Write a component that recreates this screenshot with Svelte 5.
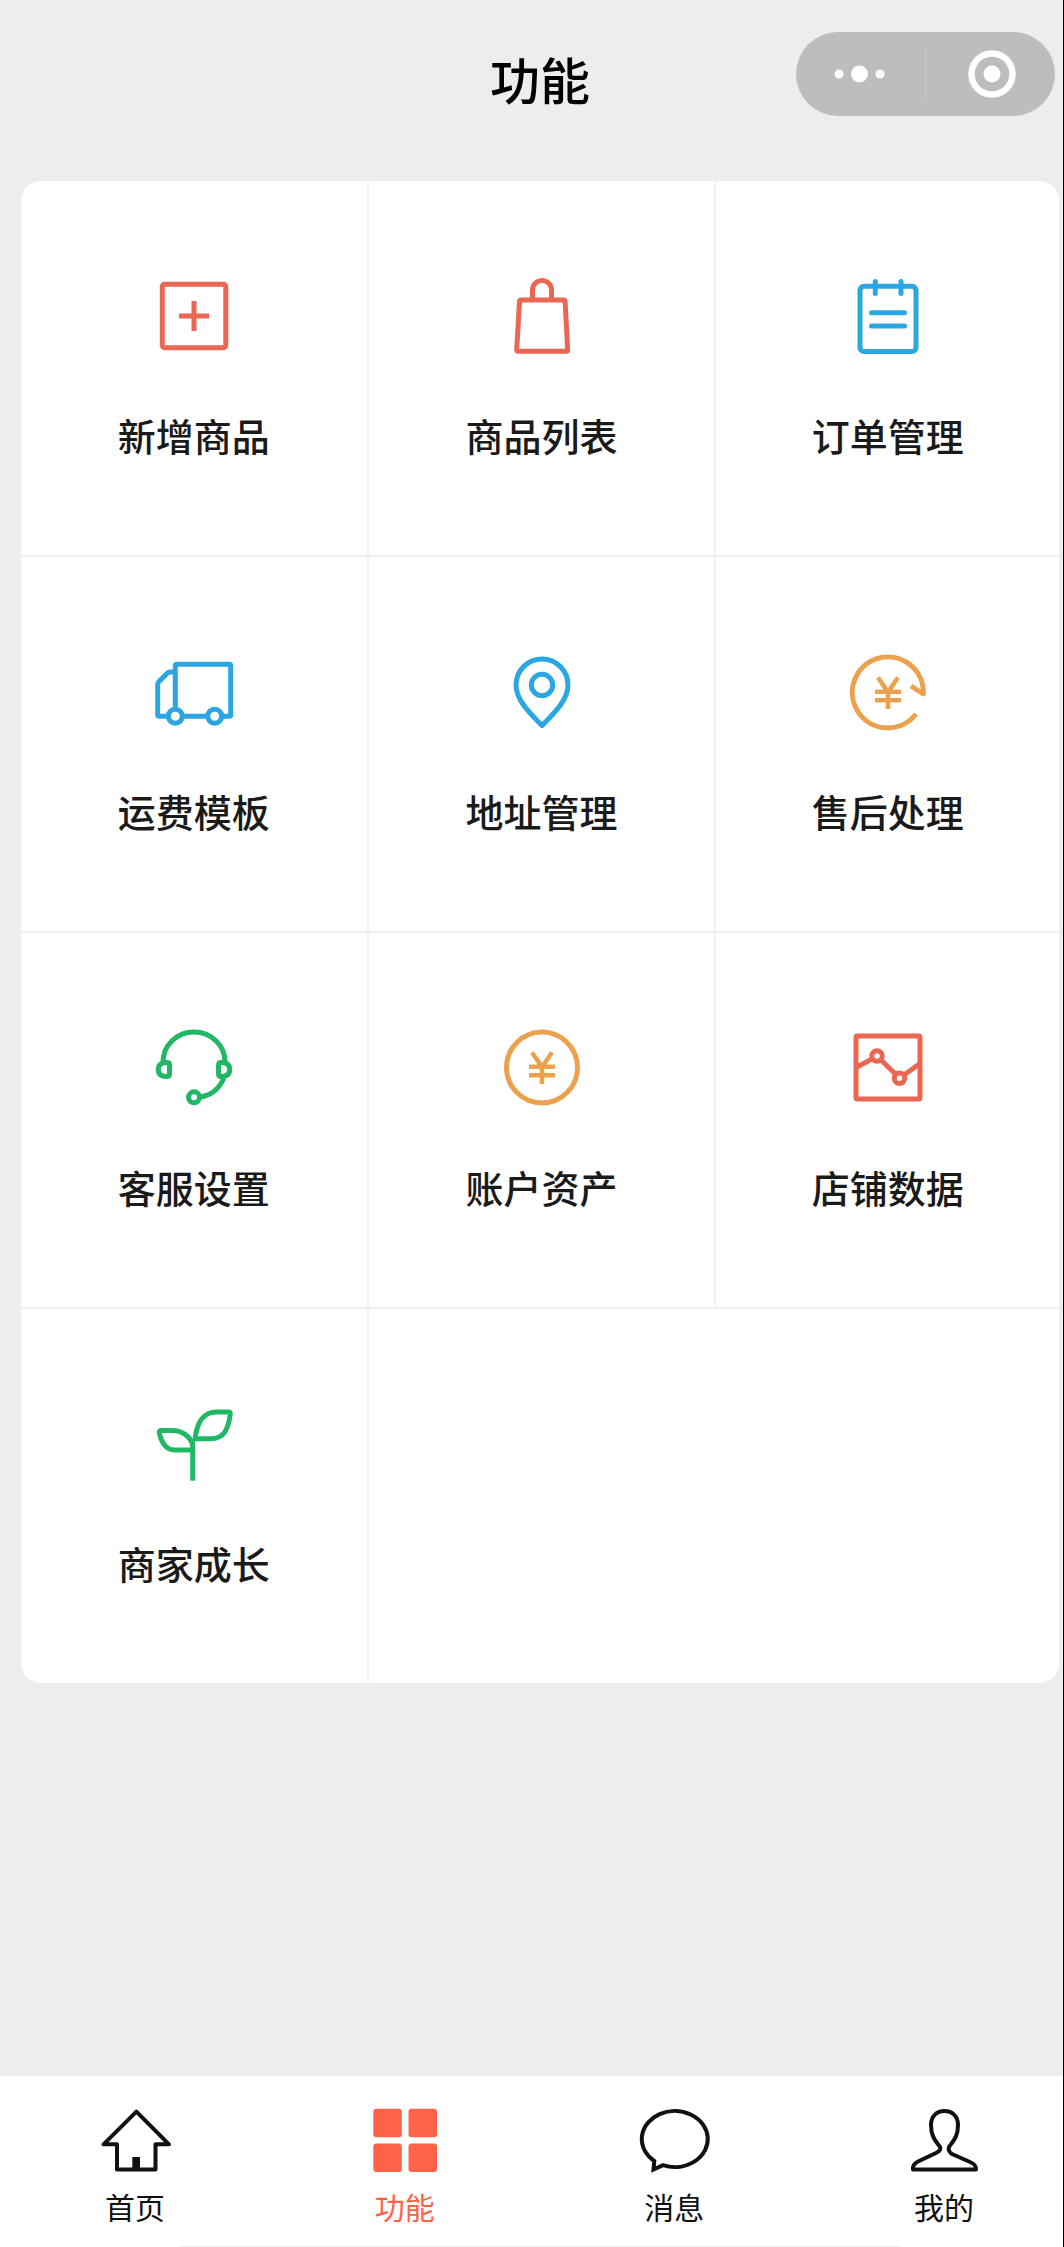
<script lang="ts">
  type Icon = 'add' | 'bag' | 'order' | 'truck' | 'pin' | 'refund' | 'service' | 'coin' | 'chart' | 'sprout';

  const features: { label: string; icon: Icon; tone: string }[] = [
    { label: '新增商品', icon: 'add', tone: 'red' },
    { label: '商品列表', icon: 'bag', tone: 'red' },
    { label: '订单管理', icon: 'order', tone: 'blue' },
    { label: '运费模板', icon: 'truck', tone: 'blue' },
    { label: '地址管理', icon: 'pin', tone: 'blue' },
    { label: '售后处理', icon: 'refund', tone: 'orange' },
    { label: '客服设置', icon: 'service', tone: 'green' },
    { label: '账户资产', icon: 'coin', tone: 'orange' },
    { label: '店铺数据', icon: 'chart', tone: 'red' },
    { label: '商家成长', icon: 'sprout', tone: 'green' }
  ];

  const tabs = [
    { id: 'home', label: '首页' },
    { id: 'features', label: '功能' },
    { id: 'messages', label: '消息' },
    { id: 'me', label: '我的' }
  ];

  let activeTab = $state('features');
</script>

<div class="page">
  <header class="header">
    <h1>功能</h1>
    <div class="capsule">
      <button type="button" aria-label="更多">
        <svg width="60" height="60" viewBox="0 0 60 60" fill="#fff">
          <circle cx="8" cy="30" r="4.5" />
          <circle cx="28.500" cy="30" r="8.500" />
          <circle cx="49" cy="30" r="4.5" />
        </svg>
      </button>
      <span class="capsule-line"></span>
      <button type="button" aria-label="关闭">
        <svg width="60" height="60" viewBox="0 0 60 60">
          <circle cx="31" cy="30" r="20.5" fill="none" stroke="#fff" stroke-width="6.5" />
          <circle cx="31" cy="30" r="8.5" fill="#fff" />
        </svg>
      </button>
    </div>
  </header>

  <main class="grid">
    {#each features as item}
      <button type="button" class="cell">
        <svg class="icon {item.tone}" viewBox="0 0 80 80" aria-hidden="true">
          {#if item.icon === 'add'}
            <rect x="8.3" y="8.3" width="63.5" height="63.5" rx="2.5" />
            <path d="M25 40h30M40 25v30" />
          {:else if item.icon === 'bag'}
            <path d="M30.5 24V14a9.5 9.5 0 0 1 19 0v10" />
            <path d="M19 24h42.500q1.500 0 1.600 1.500l2.600 48.300q0 1.500-1.500 1.500H16q-1.500 0-1.300-1.500l2.800-48.300q.1-1.500 1.500-1.500z" />
          {:else if item.icon === 'order'}
            <rect x="12" y="10.3" width="56" height="65.2" rx="4" />
            <path stroke-linecap="round" d="M27.3 5.5v12M53 5.5v12M23.5 36.7h33M23.5 50h33" />
          {:else if item.icon === 'truck'}
            <path d="M21.3 57V14q0-1.7 1.7-1.7h52q1.7 0 1.7 1.7v48.500q0 1.800-1.700 1.800h-7M53.5 64.3h-25" />
            <path d="M21.300 20H16q-1.500 0-2.500 1L5 29.500q-1.300 1.300-1.300 3v30q0 1.800 1.800 1.800H14" />
            <circle cx="21.3" cy="64.3" r="7" />
            <circle cx="60.7" cy="64.3" r="7" />
          {:else if item.icon === 'pin'}
            <path d="M40 73.5C30 63 14 49 14 33a26 26 0 0 1 52 0c0 16-16 30-26 40.5z" />
            <circle cx="40" cy="33" r="10.7" />
          {:else if item.icon === 'refund'}
            <path d="M68 62A35.500 35.500 0 1 1 75.300 42L63 34" />
            <path class="yuan" d="M30 25.5L40 40l10-14.500M40 39v18M27 39.7h26M27 48.3h26" />
          {:else if item.icon === 'service'}
            <path d="M9 34a31 30 0 0 1 62 0" />
            <path d="M13 34.500q2.500 0 2.500 2.500v9q0 2.500-2.500 2.500-8.700 0-8.700-7t8.700-7z" />
            <path d="M67 34.500q-2.500 0-2.500 2.500v9q0 2.500 2.500 2.500 8.700 0 8.700-7t-8.700-7z" />
            <path d="M70 50C65 61 58 67.5 46 69" />
            <circle cx="40" cy="69.3" r="5.5" />
          {:else if item.icon === 'coin'}
            <circle cx="40" cy="39.5" r="35.5" />
            <path class="yuan" d="M30 24.500L40 39l10-14.500M40 38v18M27 38.700h26M27 47.300h26" />
          {:else if item.icon === 'chart'}
            <rect x="8" y="8" width="64" height="63" rx="1.5" />
            <path d="M9 39l15-8M33 32l15 14.500M56 47l16-11.500" />
            <circle cx="29" cy="28" r="5.2" />
            <circle cx="51.5" cy="50.3" r="5.2" />
          {:else}
            <path d="M38.7 37v39.700" />
            <path d="M41 34.700C43 18 50 8 62 8h12.500q2 0 1.800 2C74 27 69 34.700 57 34.700z" />
            <path d="M38.7 46H20C12 46 7 38 5.300 28.500q-.3-2 1.700-2h11C28 26.500 36 32 38.700 41" />
          {/if}
        </svg>
        <span>{item.label}</span>
      </button>
    {/each}
  </main>

  <nav class="tabbar">
    {#each tabs as tab}
      <button
        type="button"
        class="tab"
        class:active={tab.id === activeTab}
        onclick={() => (activeTab = tab.id)}
      >
        <svg viewBox="0 0 80 72" aria-hidden="true">
          {#if tab.id === 'home'}
            <path d="M41.4 7.7L8.5 40.3H22v25.200h38.500V40.300H74z" />
            <path class="solid" d="M37.3 53H45v13h-7.700z" />
          {:else if tab.id === 'features'}
            <g class="solid">
              <rect x="8.3" y="4.7" width="28.5" height="28.5" rx="3" />
              <rect x="43.5" y="4.7" width="28.5" height="28.5" rx="3" />
              <rect x="8.3" y="39.5" width="28.5" height="28.5" rx="3" />
              <rect x="43.5" y="39.5" width="28.5" height="28.5" rx="3" />
            </g>
          {:else if tab.id === 'messages'}
            <path stroke-linejoin="miter" d="M20.300 57L19.500 65.500l9.500-4.300A33 28 0 1 0 20.300 57z" />
          {:else}
            <path
              d="M36 43C31 36 27 32 27 21 27 12 33 7 40.500 7S54 12 54 21c0 11-4 15-9 22-1 3 0 5 3 7l18 8c5 2 6 4 6 7.500H9c-.500-4 1-6 5-8l18-8.500c4-2 5-4 4-6z"
            />
          {/if}
        </svg>
        <span>{tab.label}</span>
      </button>
    {/each}
  </nav>
  <div class="home-line"></div>
</div>

<style>
  :global(body) {
    margin: 0;
    background: #ededed;
  }

  .page {
    display: flex;
    flex-direction: column;
    box-sizing: border-box;
    min-height: 100vh;
    border-right: 1px solid #000;
    background: #ededed;
    font-family: 'Noto Sans CJK SC', 'Noto Sans', sans-serif;
  }

  button {
    padding: 0;
    border: none;
    background: none;
    font-family: inherit;
    cursor: pointer;
  }

  .header {
    display: grid;
    grid-template-columns: 1fr auto 1fr;
    align-items: start;
    padding: 32px 8px 57px 25px;
  }

  h1 {
    grid-column: 2;
    margin: 0;
    font-size: 50px;
    font-weight: 500;
    line-height: 92px;
    color: #000;
  }

  .capsule {
    display: flex;
    align-items: center;
    justify-self: end;
    width: 259px;
    height: 84px;
    border-radius: 42px;
    background: #bdbdbd;
  }

  .capsule button {
    display: flex;
    flex: 1;
    justify-content: center;
  }

  .capsule-line {
    width: 1px;
    height: 50px;
    background: #cacaca;
  }

  .grid {
    display: grid;
    grid-template-columns: repeat(2, 33.5%) 1fr;
    margin: 0 4px 32px 21px;
    border-radius: 20px;
    background: #fff;
    overflow: hidden;
  }

  .cell {
    display: flex;
    flex-direction: column;
    align-items: center;
    gap: 52px;
    padding: 95px 0 93px;
    border-right: 2px solid #f0f0f0;
    border-bottom: 2px solid #f0f0f0;
    font-size: 38px;
    font-weight: 500;
    line-height: 54px;
    color: #1a1a1a;
  }

  .cell:nth-child(3n) {
    border-right: none;
  }

  .cell:last-child {
    border-bottom: none;
  }

  .icon {
    width: 80px;
    height: 80px;
    fill: none;
    stroke: currentColor;
    stroke-width: 5;
    stroke-linejoin: round;
  }

  .yuan {
    stroke-width: 4.5;
    stroke-linejoin: miter;
  }

  .red {
    color: #ea6753;
  }

  .blue {
    color: #2ba6e2;
  }

  .orange {
    color: #eba14d;
  }

  .green {
    color: #20b865;
  }

  .tabbar {
    display: flex;
    justify-content: space-between;
    margin-top: auto;
    padding: 28px 69px 20px 85px;
    background: #fff;
  }

  .tab {
    display: flex;
    flex-direction: column;
    align-items: center;
    gap: 10px;
    width: 100px;
    font-size: 30px;
    line-height: 40px;
    color: #111;
  }

  .tab svg {
    width: 80px;
    height: 72px;
    fill: none;
    stroke: currentColor;
    stroke-width: 4;
    stroke-linejoin: round;
  }

  .tab .solid {
    fill: currentColor;
    stroke: none;
  }

  .tab.active {
    color: #ff6347;
  }

  .home-line {
    height: 1px;
    border: solid #fff;
    border-width: 0 163px 0 180px;
    background: #ededed;
  }
</style>
